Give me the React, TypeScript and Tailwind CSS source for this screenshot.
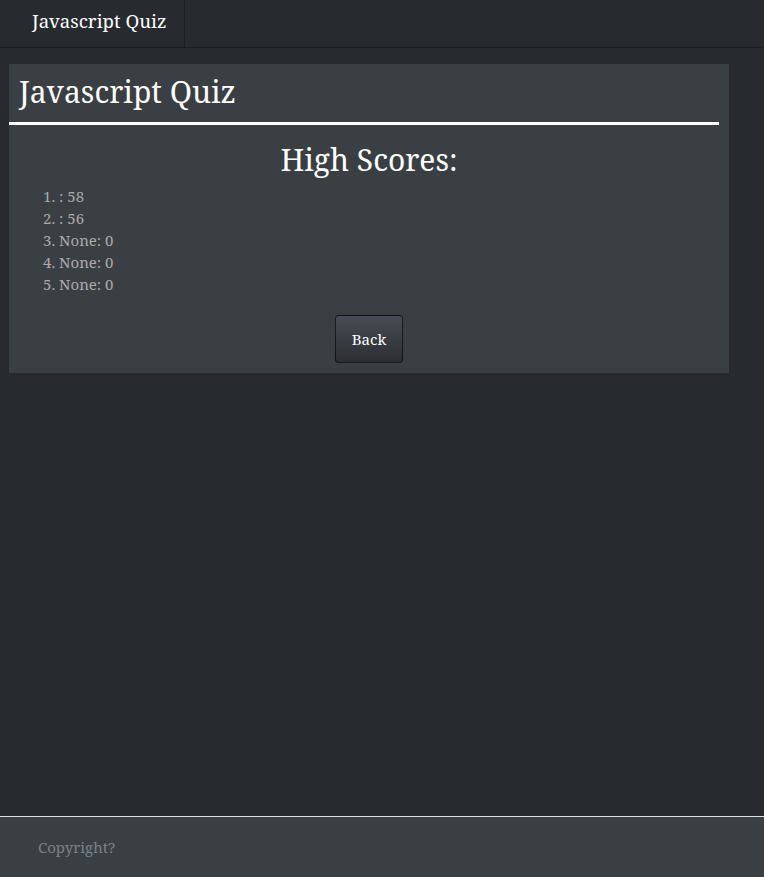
const scores = [
  { name: "", score: 58 },
  { name: "", score: 56 },
  { name: "None", score: 0 },
  { name: "None", score: 0 },
  { name: "None", score: 0 },
];

export default function App() {
  return (
    <div className="flex min-h-[877px] flex-col bg-[#272b30] font-['Noto_Serif','DejaVu_Serif',serif] text-[#aaaaaa]">
      <nav className="flex h-[48px] border-b border-[#1c1e22] bg-[#272b30]">
        <div className="flex w-[185px] items-center border-r border-[#1c1e22] pb-[5px] pl-[32px] text-[18.6px] text-white">
          Javascript Quiz
        </div>
      </nav>

      <main className="flex-1 pt-[16px]">
        <div className="ml-[9px] w-[720px] bg-[#3a3f44] pb-[10px]">
          <h1 className="mr-[10px] border-b-[3px] border-white px-[10px] pb-[10px] pt-[8px] text-[30px] leading-[40px] text-white">
            Javascript Quiz
          </h1>
          <h2 className="mt-[18px] text-center text-[30px] leading-[34px] text-white">High Scores:</h2>
          <ol className="mt-[8px] list-inside list-decimal pl-[34px] text-[15px] leading-[22px]">
            {scores.map((s, i) => (
              <li key={i}>
                {s.name}: {s.score}
              </li>
            ))}
          </ol>
          <div className="mt-[20px] flex justify-center">
            <button className="h-[48px] w-[68px] rounded-[4px] border border-[rgba(0,0,0,0.6)] bg-gradient-to-b from-[#484e55] to-[#2b2f33] text-[15px] text-white">
              Back
            </button>
          </div>
        </div>
      </main>

      <footer className="flex h-[61px] items-center border-t border-[#dddddd] bg-[#3a3f44] pl-[38px] text-[15px] text-[#7a8288]">
        Copyright?
      </footer>
    </div>
  );
}
